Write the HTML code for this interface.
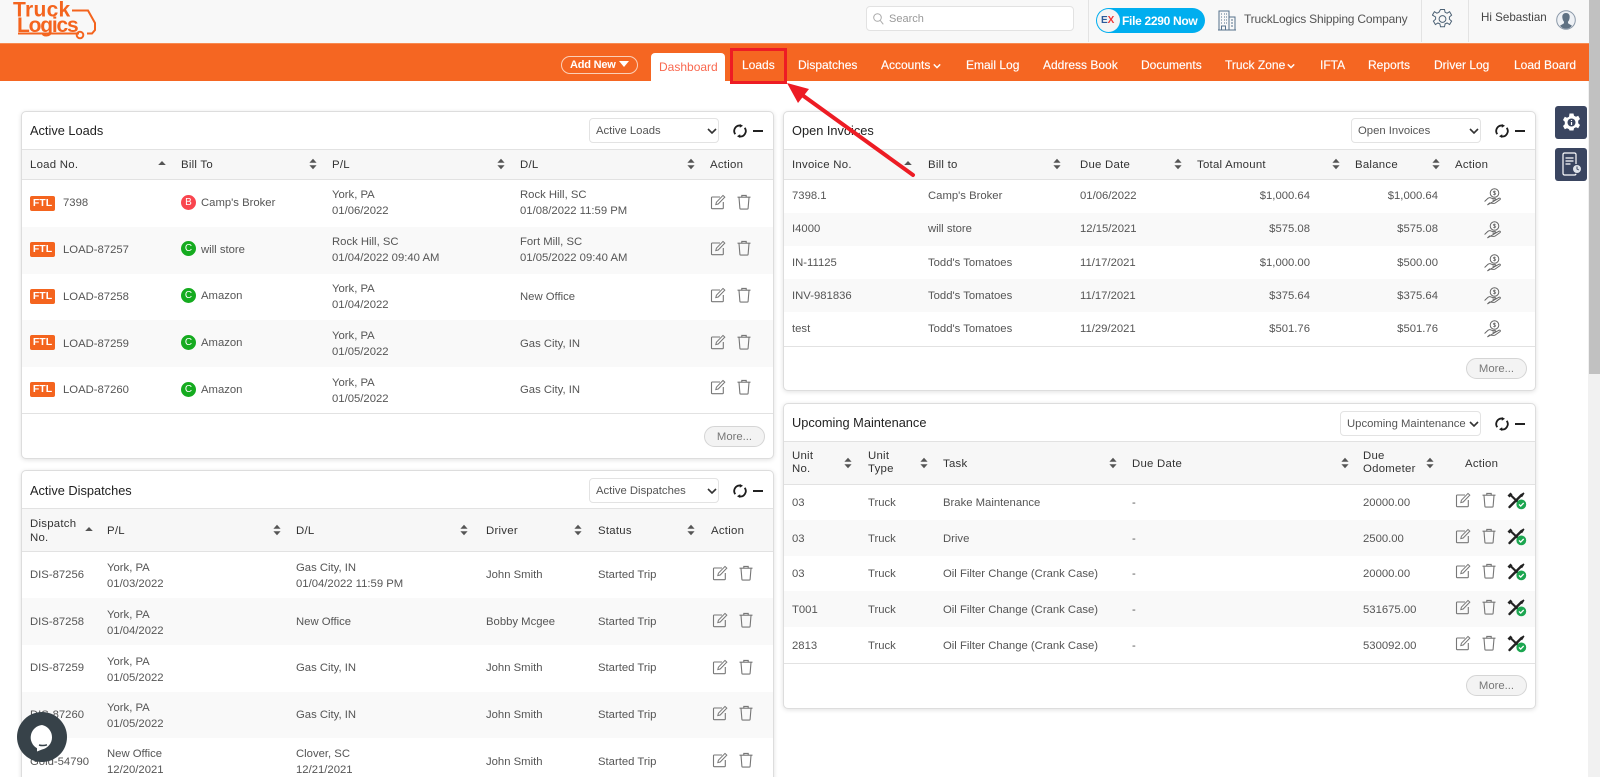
<!DOCTYPE html>
<html><head><meta charset="utf-8"><title>TruckLogics Dashboard</title>
<style>
html,body{margin:0;padding:0;width:1600px;height:777px;overflow:hidden;background:#fff}
body{font-family:"Liberation Sans",sans-serif;font-size:11.3px;color:#555;position:relative}
div,span,svg{position:absolute}
.t{white-space:nowrap;line-height:16px;margin-top:1px}
.b{white-space:nowrap;line-height:16px}
.h{white-space:nowrap;line-height:16px;color:#333;font-size:11.4px;letter-spacing:.25px;margin-top:1px}
.r{text-align:right;white-space:nowrap;line-height:16px;margin-top:1px}
.n{white-space:nowrap;line-height:16px;color:#fff;font-size:12px;top:57px;-webkit-text-stroke:.15px #fff}
.p{background:#fff;border:1px solid #ddd;border-radius:5px;box-shadow:0 1px 5px rgba(0,0,0,.12);box-sizing:border-box}
.title{white-space:nowrap;line-height:18px;color:#222;font-size:12.8px}
.hd{background:#f7f7f7;border-top:1px solid #e2e2e2;border-bottom:1px solid #e2e2e2;box-sizing:border-box}
.g{background:#f9f9f9}
.ln{height:1px;background:#e2e2e2}
.sel{background:#fff;border:1px solid #e3e3e3;border-radius:4px;box-sizing:border-box;height:25px;line-height:24px;color:#555;font-size:11.3px;padding-left:6px;white-space:nowrap}
.more{background:#f3f3f3;border:1px solid #d5d5d5;border-radius:11px;box-sizing:border-box;width:61px;height:21px;line-height:20px;text-align:center;color:#777;font-size:11.3px}
.ftl{left:30px;width:25px;height:15px;background:#f4641e;border-radius:2px;color:#fff;font-size:10.5px;font-weight:bold;line-height:15px;text-align:center}
.c{left:181px;width:15px;height:15px;border-radius:50%;color:#fff;font-size:10px;line-height:15px;text-align:center}
</style></head><body>
<svg width="0" height="0" style="position:absolute">
<defs>
<symbol id="e" viewBox="0 0 16 16"><path d="M10 3H2.2A.7.7 0 0 0 1.5 3.700V14a.7.7 0 0 0 .7.7h10.400a.7.7 0 0 0 .7-.7V8" fill="none" stroke="#777" stroke-width="1.100"/><path d="M5.800 10.600l.6-2.400 6.600-6.800 1.800 1.700-6.600 6.900z" fill="none" stroke="#777" stroke-width="1"/></symbol>
<symbol id="d" viewBox="0 0 16 16"><path d="M1.500 3.200h13M5.800 3V1.400h4.400V3M3 3.400l.9 11a.8.8 0 0 0 .8.7h6.600a.8.8 0 0 0 .8-.7l.9-11" fill="none" stroke="#777" stroke-width="1.100"/></symbol>
<symbol id="s" viewBox="0 0 8 12"><path d="M4 .8L7.600 4.800H.4zM4 11.200L.4 7.200h7.200z" fill="#555"/></symbol>
<symbol id="u" viewBox="0 0 8 12"><path d="M4 3L7.800 7H.2z" fill="#555"/></symbol>
<symbol id="m" viewBox="0 0 18 18"><circle cx="10.500" cy="5" r="4.300" fill="none" stroke="#666" stroke-width="1"/><path d="M10.500 2.600v4.800M9.200 6.200c.6.6 2.600.6 2.600-.5S9.200 4.900 9.200 3.900s1.800-.9 2.500-.4" fill="none" stroke="#666" stroke-width=".7"/><path d="M.6 13.500l3.400-3.200c1-.8 2-.9 3-.4l1.600.7h2.400c1 0 1 1.500 0 1.500H8.500M11 12.400l4-2.200c1.200-.4 1.900.7 1 1.400l-4.800 3.400c-.6.400-1.200.5-1.900.4L5.500 15 3.400 17z" fill="none" stroke="#666" stroke-width="1"/></symbol>
<symbol id="w" viewBox="0 0 20 18"><path d="M3 2.500l11 10.500" stroke="#222" stroke-width="2.200"/><path d="M14.500 3L2.500 15" stroke="#222" stroke-width="2.400" stroke-linecap="round"/><path d="M.5 3.500L3.500.5 5.500 2.500 2.500 5.500zM12.800 3L16.500 .4 17.500 1.500 15 5.200z" fill="#222"/><circle cx="14.300" cy="12.400" r="4.900" fill="#1ca650"/><path d="M12 12.400l1.700 1.700 3-3.200" fill="none" stroke="#fff" stroke-width="1.300"/></symbol>
<symbol id="ref" viewBox="0 0 14 14"><path d="M2.300 10.200A5.400 5.400 0 0 1 7.800 1.700M11.700 3.800A5.400 5.400 0 0 1 6.200 12.300" fill="none" stroke="#1c1c1c" stroke-width="1.800"/><path d="M6.800 0L10 1.800 6.800 3.800zM7.200 10.200L4 12.200 7.200 14z" fill="#1c1c1c"/></symbol>
<symbol id="car" viewBox="0 0 10 6"><path d="M1 1l4 4 4-4" fill="none" stroke="#333" stroke-width="1.600"/></symbol>
</defs></svg>

<!-- top bar -->
<div style="left:0;top:0;width:1600px;height:43px;background:#f8f8f8"></div>
<svg style="left:8px;top:0" width="92" height="42" viewBox="0 0 92 42"><path d="M64 10.500h16l7 12.500v7l-3 3.500h-5M71 33.500H10" fill="none" stroke="#f4641e" stroke-width="2"/><circle cx="72" cy="35" r="3.300" fill="none" stroke="#f4641e" stroke-width="2"/><text x="5" y="16.500" font-family="Liberation Sans" font-weight="bold" font-size="21" fill="#f4641e" letter-spacing=".3">Truck</text><text x="9" y="32" font-family="Liberation Sans" font-weight="bold" font-size="21" fill="#f4641e" letter-spacing="-1.200">Logics</text></svg>
<div style="left:866px;top:6px;width:208px;height:25px;background:#fff;border:1px solid #e2e2e2;border-radius:4px;box-sizing:border-box"></div>
<svg style="left:873px;top:13px" width="11" height="12" viewBox="0 0 11 12"><circle cx="4.500" cy="4.500" r="3.800" fill="none" stroke="#aaa"/><path d="M7.300 7.500l3 3.800" stroke="#aaa"/></svg>
<span class="b" style="left:889px;top:11px;color:#999;font-size:11px">Search</span>
<div style="left:1088px;top:0;width:1px;height:42px;background:#e3e3e3"></div>
<div style="left:1096px;top:8px;width:109px;height:25px;background:#00aeef;border-radius:13px"></div>
<div style="left:1097px;top:9px;width:23px;height:23px;background:#f4f4f4;border-radius:50%"></div>
<span class="b" style="left:1101px;top:13px;font-size:10px;color:#2a5a9a;font-weight:bold">E<span style="position:static;color:#e33">X</span></span>
<span class="b" style="left:1122px;top:13px;color:#fff;font-size:12px;font-weight:bold;letter-spacing:-.3px">File 2290 Now</span>
<svg style="left:1218px;top:9px" width="18" height="22" viewBox="0 0 18 22"><path d="M1 21V2h10v19M11 8h6v13M0 21h18M3 5h1M6 5h1M8 5h1M3 8h1M6 8h1M8 8h1M3 11h1M6 11h1M8 11h1M3 14h1M6 14h1M8 14h1M3.500 21v-4h4v4M13 11h2M13 14h2M13 17h2" fill="none" stroke="#55708a" stroke-width="1"/></svg>
<span class="b" style="left:1244px;top:11px;color:#555;font-size:12px;letter-spacing:-.2px">TruckLogics Shipping Company</span>
<div style="left:1421px;top:0;width:1px;height:42px;background:#e3e3e3"></div>
<svg style="left:1432px;top:8px" width="21" height="22" viewBox="0 0 21 22"><path d="M8.500 1.500h4l.6 2.800 2 .9 2.500-1.500 2 3.400-2.200 1.900v2.200l2.200 1.900-2 3.400-2.500-1.500-2 .9-.6 2.800h-4l-.6-2.800-2-.9-2.500 1.500-2-3.400 2.200-1.900V9L.4 7.100l2-3.400 2.500 1.500 2-.9z" fill="none" stroke="#4d6275" stroke-width="1"/><circle cx="10.500" cy="11" r="3.400" fill="none" stroke="#4d6275"/></svg>
<div style="left:1468px;top:0;width:1px;height:42px;background:#e3e3e3"></div>
<span class="b" style="left:1481px;top:10px;color:#444;font-size:11.6px">Hi Sebastian</span>
<svg style="left:1556px;top:10px" width="20" height="20" viewBox="0 0 20 20"><circle cx="10" cy="10" r="9.300" fill="#eef1f5" stroke="#8a98a8"/><path d="M10 3c3 0 4 2.200 3.600 5-.3 2-1 3-1.600 3.700v1.500l4 2.500c-1.500 1.900-3.500 3-6 3s-4.500-1.100-6-3l4-2.500v-1.500C7.400 11 6.700 10 6.400 8 6 5.200 7 3 10 3z" fill="#5f7183"/></svg>

<!-- nav -->
<div style="left:0;top:43px;width:1600px;height:38px;background:#f56622"></div>
<div style="left:0;top:43px;width:1600px;height:1px;background:#f88a50"></div>
<div style="left:561px;top:56px;width:77px;height:18px;border:1px solid #fbd0b8;border-radius:10px;box-sizing:border-box"></div>
<span class="b" style="left:570px;top:57px;color:#fff;font-size:11px;font-weight:bold;letter-spacing:-.2px">Add New</span>
<svg style="left:619px;top:61px" width="10" height="6" viewBox="0 0 10 6"><path d="M0 0h10L5 6z" fill="#fff"/></svg>
<div style="left:651px;top:53px;width:74px;height:28px;background:#fff;border-radius:4px 4px 0 0"></div>
<span class="b" style="left:659px;top:59px;color:#f9684f;font-size:12px">Dashboard</span>
<span class="n" style="left:742px">Loads</span>
<span class="n" style="left:798px">Dispatches</span>
<span class="n" style="left:881px">Accounts</span>
<svg style="left:933px;top:63px" width="8" height="6" viewBox="0 0 10 6"><path d="M1 1l4 4 4-4" fill="none" stroke="#fff" stroke-width="1.800"/></svg>
<span class="n" style="left:966px">Email Log</span>
<span class="n" style="left:1043px">Address Book</span>
<span class="n" style="left:1141px">Documents</span>
<span class="n" style="left:1225px">Truck Zone</span>
<svg style="left:1287px;top:63px" width="8" height="6" viewBox="0 0 10 6"><path d="M1 1l4 4 4-4" fill="none" stroke="#fff" stroke-width="1.800"/></svg>
<span class="n" style="left:1320px">IFTA</span>
<span class="n" style="left:1368px">Reports</span>
<span class="n" style="left:1434px">Driver Log</span>
<span class="n" style="left:1514px">Load Board</span>

<!-- Active Loads -->
<div class="p" style="left:21px;top:111px;width:753px;height:348px"></div>
<span class="title" style="left:30px;top:122px">Active Loads</span>
<div class="sel" style="left:589px;top:118px;width:130px">Active Loads</div>
<svg style="left:707px;top:128px" width="10" height="6"><use href="#car"/></svg>
<svg style="left:733px;top:124px" width="14" height="14"><use href="#ref"/></svg>
<div style="left:753px;top:130px;width:10px;height:2px;background:#222"></div>
<div class="hd" style="left:22px;top:149px;width:751px;height:31px"></div>
<div class="g" style="left:22px;top:227px;width:751px;height:47px"></div>
<div class="g" style="left:22px;top:320px;width:751px;height:47px"></div>
<div class="ln" style="left:22px;top:413px;width:751px"></div>
<span class="h" style="left:30px;top:156px">Load No.</span><svg style="left:158px;top:158px" width="8" height="12"><use href="#u"/></svg>
<span class="h" style="left:181px;top:156px">Bill To</span><svg style="left:309px;top:158px" width="8" height="12"><use href="#s"/></svg>
<span class="h" style="left:332px;top:156px">P/L</span><svg style="left:497px;top:158px" width="8" height="12"><use href="#s"/></svg>
<span class="h" style="left:520px;top:156px">D/L</span><svg style="left:687px;top:158px" width="8" height="12"><use href="#s"/></svg>
<span class="h" style="left:710px;top:156px">Action</span>

<span class="ftl" style="top:196px">FTL</span><span class="t" style="left:63px;top:194px">7398</span>
<span class="c" style="top:195px;background:#f9454e">B</span><span class="t" style="left:201px;top:194px">Camp's Broker</span>
<span class="t" style="left:332px;top:186px">York, PA<br>01/06/2022</span><span class="t" style="left:520px;top:186px">Rock Hill, SC<br>01/08/2022 11:59 PM</span>
<svg style="left:710px;top:194px" width="16" height="16"><use href="#e"/></svg><svg style="left:736px;top:194px" width="16" height="16"><use href="#d"/></svg>

<span class="ftl" style="top:242px">FTL</span><span class="t" style="left:63px;top:241px">LOAD-87257</span>
<span class="c" style="top:241px;background:#15ab1f">C</span><span class="t" style="left:201px;top:241px">will store</span>
<span class="t" style="left:332px;top:233px">Rock Hill, SC<br>01/04/2022 09:40 AM</span><span class="t" style="left:520px;top:233px">Fort Mill, SC<br>01/05/2022 09:40 AM</span>
<svg style="left:710px;top:240px" width="16" height="16"><use href="#e"/></svg><svg style="left:736px;top:240px" width="16" height="16"><use href="#d"/></svg>

<span class="ftl" style="top:289px">FTL</span><span class="t" style="left:63px;top:288px">LOAD-87258</span>
<span class="c" style="top:288px;background:#15ab1f">C</span><span class="t" style="left:201px;top:287px">Amazon</span>
<span class="t" style="left:332px;top:280px">York, PA<br>01/04/2022</span><span class="t" style="left:520px;top:288px">New Office</span>
<svg style="left:710px;top:287px" width="16" height="16"><use href="#e"/></svg><svg style="left:736px;top:287px" width="16" height="16"><use href="#d"/></svg>

<span class="ftl" style="top:335px">FTL</span><span class="t" style="left:63px;top:335px">LOAD-87259</span>
<span class="c" style="top:335px;background:#15ab1f">C</span><span class="t" style="left:201px;top:334px">Amazon</span>
<span class="t" style="left:332px;top:327px">York, PA<br>01/05/2022</span><span class="t" style="left:520px;top:335px">Gas City, IN</span>
<svg style="left:710px;top:334px" width="16" height="16"><use href="#e"/></svg><svg style="left:736px;top:334px" width="16" height="16"><use href="#d"/></svg>

<span class="ftl" style="top:382px">FTL</span><span class="t" style="left:63px;top:381px">LOAD-87260</span>
<span class="c" style="top:382px;background:#15ab1f">C</span><span class="t" style="left:201px;top:381px">Amazon</span>
<span class="t" style="left:332px;top:374px">York, PA<br>01/05/2022</span><span class="t" style="left:520px;top:381px">Gas City, IN</span>
<svg style="left:710px;top:379px" width="16" height="16"><use href="#e"/></svg><svg style="left:736px;top:379px" width="16" height="16"><use href="#d"/></svg>
<div class="more" style="left:704px;top:426px">More...</div>

<!-- Active Dispatches -->
<div class="p" style="left:21px;top:470px;width:753px;height:320px"></div>
<span class="title" style="left:30px;top:482px">Active Dispatches</span>
<div class="sel" style="left:589px;top:478px;width:130px">Active Dispatches</div>
<svg style="left:707px;top:488px" width="10" height="6"><use href="#car"/></svg>
<svg style="left:733px;top:484px" width="14" height="14"><use href="#ref"/></svg>
<div style="left:753px;top:490px;width:10px;height:2px;background:#222"></div>
<div class="hd" style="left:22px;top:508px;width:751px;height:44px"></div>
<div class="g" style="left:22px;top:598px;width:751px;height:47px"></div>
<div class="g" style="left:22px;top:692px;width:751px;height:46px"></div>
<span class="h" style="left:30px;top:516px;line-height:14px">Dispatch<br>No.</span><svg style="left:85px;top:524px" width="8" height="12"><use href="#u"/></svg>
<span class="h" style="left:107px;top:522px">P/L</span><svg style="left:273px;top:524px" width="8" height="12"><use href="#s"/></svg>
<span class="h" style="left:296px;top:522px">D/L</span><svg style="left:460px;top:524px" width="8" height="12"><use href="#s"/></svg>
<span class="h" style="left:486px;top:522px">Driver</span><svg style="left:574px;top:524px" width="8" height="12"><use href="#s"/></svg>
<span class="h" style="left:598px;top:522px">Status</span><svg style="left:687px;top:524px" width="8" height="12"><use href="#s"/></svg>
<span class="h" style="left:711px;top:522px">Action</span>

<span class="t" style="left:30px;top:566px">DIS-87256</span><span class="t" style="left:107px;top:559px">York, PA<br>01/03/2022</span><span class="t" style="left:296px;top:559px">Gas City, IN<br>01/04/2022 11:59 PM</span><span class="t" style="left:486px;top:566px">John Smith</span><span class="t" style="left:598px;top:566px">Started Trip</span>
<svg style="left:712px;top:565px" width="16" height="16"><use href="#e"/></svg><svg style="left:738px;top:565px" width="16" height="16"><use href="#d"/></svg>
<span class="t" style="left:30px;top:613px">DIS-87258</span><span class="t" style="left:107px;top:606px">York, PA<br>01/04/2022</span><span class="t" style="left:296px;top:613px">New Office</span><span class="t" style="left:486px;top:613px">Bobby Mcgee</span><span class="t" style="left:598px;top:613px">Started Trip</span>
<svg style="left:712px;top:612px" width="16" height="16"><use href="#e"/></svg><svg style="left:738px;top:612px" width="16" height="16"><use href="#d"/></svg>
<span class="t" style="left:30px;top:659px">DIS-87259</span><span class="t" style="left:107px;top:653px">York, PA<br>01/05/2022</span><span class="t" style="left:296px;top:659px">Gas City, IN</span><span class="t" style="left:486px;top:659px">John Smith</span><span class="t" style="left:598px;top:659px">Started Trip</span>
<svg style="left:712px;top:659px" width="16" height="16"><use href="#e"/></svg><svg style="left:738px;top:659px" width="16" height="16"><use href="#d"/></svg>
<span class="t" style="left:30px;top:706px">DIS-87260</span><span class="t" style="left:107px;top:699px">York, PA<br>01/05/2022</span><span class="t" style="left:296px;top:706px">Gas City, IN</span><span class="t" style="left:486px;top:706px">John Smith</span><span class="t" style="left:598px;top:706px">Started Trip</span>
<svg style="left:712px;top:705px" width="16" height="16"><use href="#e"/></svg><svg style="left:738px;top:705px" width="16" height="16"><use href="#d"/></svg>
<span class="t" style="left:30px;top:753px">Gold-54790</span><span class="t" style="left:107px;top:745px">New Office<br>12/20/2021</span><span class="t" style="left:296px;top:745px">Clover, SC<br>12/21/2021</span><span class="t" style="left:486px;top:753px">John Smith</span><span class="t" style="left:598px;top:753px">Started Trip</span>
<svg style="left:712px;top:752px" width="16" height="16"><use href="#e"/></svg><svg style="left:738px;top:752px" width="16" height="16"><use href="#d"/></svg>

<!-- Open Invoices -->
<div class="p" style="left:783px;top:111px;width:753px;height:280px"></div>
<span class="title" style="left:792px;top:122px">Open Invoices</span>
<div class="sel" style="left:1351px;top:118px;width:130px">Open Invoices</div>
<svg style="left:1469px;top:128px" width="10" height="6"><use href="#car"/></svg>
<svg style="left:1495px;top:124px" width="14" height="14"><use href="#ref"/></svg>
<div style="left:1515px;top:130px;width:10px;height:2px;background:#222"></div>
<div class="hd" style="left:784px;top:149px;width:751px;height:31px"></div>
<div class="g" style="left:784px;top:213px;width:751px;height:33px"></div>
<div class="g" style="left:784px;top:279px;width:751px;height:33px"></div>
<div class="ln" style="left:784px;top:346px;width:751px"></div>
<span class="h" style="left:792px;top:156px">Invoice No.</span><svg style="left:904px;top:158px" width="8" height="12"><use href="#u"/></svg>
<span class="h" style="left:928px;top:156px">Bill to</span><svg style="left:1053px;top:158px" width="8" height="12"><use href="#s"/></svg>
<span class="h" style="left:1080px;top:156px">Due Date</span><svg style="left:1174px;top:158px" width="8" height="12"><use href="#s"/></svg>
<span class="h" style="left:1197px;top:156px">Total Amount</span><svg style="left:1332px;top:158px" width="8" height="12"><use href="#s"/></svg>
<span class="h" style="left:1355px;top:156px">Balance</span><svg style="left:1432px;top:158px" width="8" height="12"><use href="#s"/></svg>
<span class="h" style="left:1455px;top:156px">Action</span>

<span class="t" style="left:792px;top:187px">7398.1</span><span class="t" style="left:928px;top:187px">Camp's Broker</span><span class="t" style="left:1080px;top:187px">01/06/2022</span><span class="r" style="right:290px;top:187px">$1,000.64</span><span class="r" style="right:162px;top:187px">$1,000.64</span><svg style="left:1484px;top:188px" width="18" height="18"><use href="#m"/></svg>
<span class="t" style="left:792px;top:220px">I4000</span><span class="t" style="left:928px;top:220px">will store</span><span class="t" style="left:1080px;top:220px">12/15/2021</span><span class="r" style="right:290px;top:220px">$575.08</span><span class="r" style="right:162px;top:220px">$575.08</span><svg style="left:1484px;top:221px" width="18" height="18"><use href="#m"/></svg>
<span class="t" style="left:792px;top:254px">IN-11125</span><span class="t" style="left:928px;top:254px">Todd's Tomatoes</span><span class="t" style="left:1080px;top:254px">11/17/2021</span><span class="r" style="right:290px;top:254px">$1,000.00</span><span class="r" style="right:162px;top:254px">$500.00</span><svg style="left:1484px;top:254px" width="18" height="18"><use href="#m"/></svg>
<span class="t" style="left:792px;top:287px">INV-981836</span><span class="t" style="left:928px;top:287px">Todd's Tomatoes</span><span class="t" style="left:1080px;top:287px">11/17/2021</span><span class="r" style="right:290px;top:287px">$375.64</span><span class="r" style="right:162px;top:287px">$375.64</span><svg style="left:1484px;top:287px" width="18" height="18"><use href="#m"/></svg>
<span class="t" style="left:792px;top:320px">test</span><span class="t" style="left:928px;top:320px">Todd's Tomatoes</span><span class="t" style="left:1080px;top:320px">11/29/2021</span><span class="r" style="right:290px;top:320px">$501.76</span><span class="r" style="right:162px;top:320px">$501.76</span><svg style="left:1484px;top:320px" width="18" height="18"><use href="#m"/></svg>
<div class="more" style="left:1466px;top:358px">More...</div>

<!-- Upcoming Maintenance -->
<div class="p" style="left:783px;top:403px;width:753px;height:306px"></div>
<span class="title" style="left:792px;top:414px">Upcoming Maintenance</span>
<div class="sel" style="left:1340px;top:411px;width:141px">Upcoming Maintenance</div>
<svg style="left:1469px;top:421px" width="10" height="6"><use href="#car"/></svg>
<svg style="left:1495px;top:417px" width="14" height="14"><use href="#ref"/></svg>
<div style="left:1515px;top:423px;width:10px;height:2px;background:#222"></div>
<div class="hd" style="left:784px;top:441px;width:751px;height:44px"></div>
<div class="g" style="left:784px;top:520px;width:751px;height:36px"></div>
<div class="g" style="left:784px;top:591px;width:751px;height:36px"></div>
<div class="ln" style="left:784px;top:663px;width:751px"></div>
<span class="h" style="left:792px;top:449px;line-height:13px">Unit<br>No.</span><svg style="left:844px;top:457px" width="8" height="12"><use href="#s"/></svg>
<span class="h" style="left:868px;top:449px;line-height:13px">Unit<br>Type</span><svg style="left:920px;top:457px" width="8" height="12"><use href="#s"/></svg>
<span class="h" style="left:943px;top:455px">Task</span><svg style="left:1109px;top:457px" width="8" height="12"><use href="#s"/></svg>
<span class="h" style="left:1132px;top:455px">Due Date</span><svg style="left:1341px;top:457px" width="8" height="12"><use href="#s"/></svg>
<span class="h" style="left:1363px;top:449px;line-height:13px">Due<br>Odometer</span><svg style="left:1426px;top:457px" width="8" height="12"><use href="#s"/></svg>
<span class="h" style="left:1465px;top:455px">Action</span>

<span class="t" style="left:792px;top:494px">03</span><span class="t" style="left:868px;top:494px">Truck</span><span class="t" style="left:943px;top:494px">Brake Maintenance</span><span class="t" style="left:1132px;top:494px">-</span><span class="t" style="left:1363px;top:494px">20000.00</span>
<svg style="left:1455px;top:492px" width="16" height="16"><use href="#e"/></svg><svg style="left:1481px;top:492px" width="16" height="16"><use href="#d"/></svg><svg style="left:1507px;top:492px" width="20" height="18"><use href="#w"/></svg>
<span class="t" style="left:792px;top:530px">03</span><span class="t" style="left:868px;top:530px">Truck</span><span class="t" style="left:943px;top:530px">Drive</span><span class="t" style="left:1132px;top:530px">-</span><span class="t" style="left:1363px;top:530px">2500.00</span>
<svg style="left:1455px;top:528px" width="16" height="16"><use href="#e"/></svg><svg style="left:1481px;top:528px" width="16" height="16"><use href="#d"/></svg><svg style="left:1507px;top:528px" width="20" height="18"><use href="#w"/></svg>
<span class="t" style="left:792px;top:565px">03</span><span class="t" style="left:868px;top:565px">Truck</span><span class="t" style="left:943px;top:565px">Oil Filter Change (Crank Case)</span><span class="t" style="left:1132px;top:565px">-</span><span class="t" style="left:1363px;top:565px">20000.00</span>
<svg style="left:1455px;top:563px" width="16" height="16"><use href="#e"/></svg><svg style="left:1481px;top:563px" width="16" height="16"><use href="#d"/></svg><svg style="left:1507px;top:563px" width="20" height="18"><use href="#w"/></svg>
<span class="t" style="left:792px;top:601px">T001</span><span class="t" style="left:868px;top:601px">Truck</span><span class="t" style="left:943px;top:601px">Oil Filter Change (Crank Case)</span><span class="t" style="left:1132px;top:601px">-</span><span class="t" style="left:1363px;top:601px">531675.00</span>
<svg style="left:1455px;top:599px" width="16" height="16"><use href="#e"/></svg><svg style="left:1481px;top:599px" width="16" height="16"><use href="#d"/></svg><svg style="left:1507px;top:599px" width="20" height="18"><use href="#w"/></svg>
<span class="t" style="left:792px;top:637px">2813</span><span class="t" style="left:868px;top:637px">Truck</span><span class="t" style="left:943px;top:637px">Oil Filter Change (Crank Case)</span><span class="t" style="left:1132px;top:637px">-</span><span class="t" style="left:1363px;top:637px">530092.00</span>
<svg style="left:1455px;top:635px" width="16" height="16"><use href="#e"/></svg><svg style="left:1481px;top:635px" width="16" height="16"><use href="#d"/></svg><svg style="left:1507px;top:635px" width="20" height="18"><use href="#w"/></svg>
<div class="more" style="left:1466px;top:675px">More...</div>

<!-- side buttons -->
<div style="left:1555px;top:106px;width:32px;height:33px;background:#3a4560;border-radius:3px"></div>
<svg style="left:1562px;top:113px" width="19" height="19" viewBox="0 0 19 19"><path d="M7.500 .5h4l.5 2.300 2 1 2.200-1 1.800 3.200-1.800 1.700v2.600l1.800 1.700-1.800 3.200-2.200-1-2 1-.5 2.300h-4L7 16.200l-2-1-2.200 1L1 13l1.800-1.700V8.700L1 7l1.800-3.200 2.200 1 2-1z" fill="#fff"/><circle cx="9.500" cy="9.500" r="4" fill="#3a4560"/><path d="M9.500 7v1M9.500 9v3" stroke="#fff" stroke-width="1.200"/></svg>
<div style="left:1555px;top:148px;width:32px;height:33px;background:#3a4560;border-radius:3px"></div>
<svg style="left:1561px;top:152px" width="22" height="25" viewBox="0 0 22 25"><path d="M15 12V2.500a1.500 1.500 0 0 0-1.500-1.500h-10A1.500 1.500 0 0 0 2 2.500v19A1.500 1.500 0 0 0 3.500 23h10c1 0 1.500-.5 1.500-1.500" fill="none" stroke="#fff" stroke-width="1.200"/><path d="M4.500 6h8M4.500 9h8M4.500 12h5" stroke="#fff" stroke-width="1.200"/><circle cx="16" cy="17" r="4.500" fill="#dfe3ea" stroke="#3a4560"/><path d="M16 14.500V17l1.800 1" stroke="#3a4560" fill="none"/></svg>

<!-- scrollbar -->
<div style="left:1588px;top:81px;width:12px;height:696px;background:#f1f1f1"></div>
<div style="left:1589px;top:0;width:11px;height:374px;background:#c1c1c1"></div>

<!-- annotation -->
<div style="left:730px;top:48px;width:57px;height:36px;border:3px solid #ed1c24;box-sizing:border-box"></div>
<svg style="left:780px;top:78px" width="140" height="102" viewBox="780 78 140 102"><path d="M913 175L798 92" stroke="#ed1c24" stroke-width="4" stroke-linecap="round"/><path d="M787 83l22 6-11 14z" fill="#ed1c24"/></svg>

<!-- chat -->
<div style="left:17px;top:712px;width:50px;height:50px;background:#374249;border-radius:50%"></div>
<svg style="left:28px;top:724px" width="28" height="28" viewBox="0 0 28 28"><path d="M14 1a12.500 12.500 0 0 1 0 24.500l-5 2v-3.200A12.500 12.500 0 0 1 14 1z" fill="#fff"/><path d="M11 21q4 1.200 8-.2" stroke="#374249" stroke-width="1.500" fill="none"/></svg>
</body></html>
